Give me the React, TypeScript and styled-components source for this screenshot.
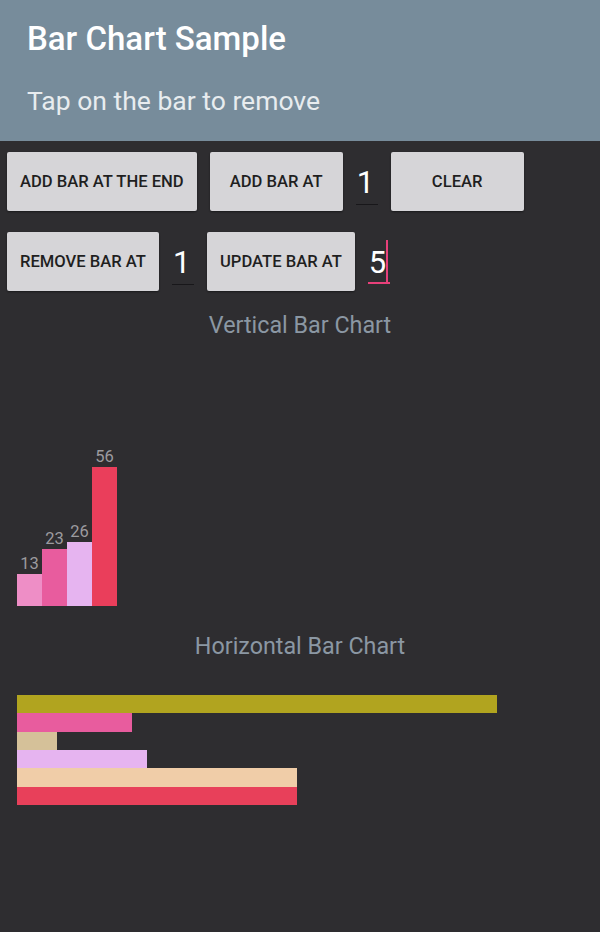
import styled, { createGlobalStyle } from 'styled-components';

const GlobalStyle = createGlobalStyle`
    html, body {
        margin: 0;
        padding: 0;
        background: #2e2d30;
    }
    body {
        font-family: Roboto, 'Noto Sans', 'Liberation Sans', sans-serif;
    }
`;

const VERTICAL_SCALE = 2.48;
const HORIZONTAL_SCALE = 5;

const verticalBars = [
    { id: 0, value: 13, color: '#ee8ec6' },
    { id: 1, value: 23, color: '#e85c9e' },
    { id: 2, value: 26, color: '#e6b4f0' },
    { id: 3, value: 56, color: '#ea3e5b' },
];

const horizontalBars = [
    { id: 0, value: 96, color: '#b1a41f' },
    { id: 1, value: 23, color: '#e85c9e' },
    { id: 2, value: 8, color: '#d5c199' },
    { id: 3, value: 26, color: '#e6b4f0' },
    { id: 4, value: 56, color: '#f0cda8' },
    { id: 5, value: 56, color: '#e8405a' },
];

const App = () => {
    return (
        <Page>
            <GlobalStyle />
            <Header>
                <Title>Bar Chart Sample</Title>
                <Subtitle>Tap on the bar to remove</Subtitle>
            </Header>

            <Controls>
                <Row>
                    <Button>ADD BAR AT THE END</Button>
                    <Button>ADD BAR AT</Button>
                    <Field>1</Field>
                    <Button>CLEAR</Button>
                </Row>
                <Row>
                    <Button>REMOVE BAR AT</Button>
                    <Field>1</Field>
                    <Button>UPDATE BAR AT</Button>
                    <Field $focused>
                        5
                        <Caret />
                    </Field>
                </Row>
            </Controls>

            <ChartTitle>Vertical Bar Chart</ChartTitle>
            <VerticalChart>
                {verticalBars.map((bar) => (
                    <Column key={bar.id}>
                        <BarLabel>{bar.value}</BarLabel>
                        <VBar style={{ height: bar.value * VERTICAL_SCALE, background: bar.color }} />
                    </Column>
                ))}
            </VerticalChart>

            <ChartTitle>Horizontal Bar Chart</ChartTitle>
            <HorizontalChart>
                {horizontalBars.map((bar) => (
                    <HBar key={bar.id} style={{ width: bar.value * HORIZONTAL_SCALE, background: bar.color }} />
                ))}
            </HorizontalChart>
        </Page>
    );
};
export default App;

const Page = styled.div`
    width: 600px;
    min-height: 932px;
    background: #2e2d30;
    display: flex;
    flex-direction: column;
`;
const Header = styled.header`
    height: 141px;
    box-sizing: border-box;
    padding: 21px 27px 0;
    background: #778c9b;
    display: flex;
    flex-direction: column;
`;
const Title = styled.h1`
    margin: 0;
    font-size: 33px;
    line-height: 36px;
    font-weight: 500;
    color: #ffffff;
`;
const Subtitle = styled.div`
    margin-top: 29px;
    font-size: 26.5px;
    line-height: 30px;
    font-weight: 400;
    color: #e8ecef;
`;
const Controls = styled.div`
    padding: 11px 7px 0;
    display: flex;
    flex-direction: column;
    gap: 21px;
`;
const Row = styled.div`
    display: flex;
    align-items: flex-start;
    gap: 13px;
`;
const Button = styled.button`
    height: 59px;
    min-width: 133px;
    padding: 0 13px;
    border: none;
    border-radius: 2px;
    background: #d6d5d8;
    box-shadow: 0 1px 2px rgba(0, 0, 0, 0.45);
    font-family: Roboto, 'Noto Sans', sans-serif;
    font-size: 16.6px;
    font-weight: 500;
    color: #1f1f1f;
    white-space: nowrap;
`;
const Field = styled.div<{ $focused?: boolean }>`
    position: relative;
    width: 22px;
    margin-top: 16px;
    padding: 0 0 ${(p) => (p.$focused ? '4px' : '6px')} 1px;
    box-sizing: border-box;
    font-size: 31px;
    line-height: 30px;
    color: #ffffff;
    border-bottom: ${(p) => (p.$focused ? '2px solid #e8407a' : '1px solid #18171a')};
`;
const Caret = styled.span`
    position: absolute;
    left: 18px;
    top: -8px;
    width: 2px;
    height: 42px;
    background: #e8407a;
`;
const ChartTitle = styled.div`
    margin-top: 21px;
    text-align: center;
    font-size: 23.3px;
    line-height: 26px;
    color: #8b97a3;
`;
const VerticalChart = styled.div`
    height: 268px;
    padding-left: 17px;
    margin-bottom: 6px;
    display: flex;
    align-items: flex-end;
`;
const Column = styled.div`
    width: 25px;
    display: flex;
    flex-direction: column;
    align-items: center;
`;
const BarLabel = styled.div`
    font-size: 16.5px;
    line-height: 18px;
    margin-bottom: 1px;
    color: #9c9b9f;
`;
const VBar = styled.div`
    width: 100%;
`;
const HorizontalChart = styled.div`
    margin-top: 36px;
    padding-left: 17px;
    display: flex;
    flex-direction: column;
    align-items: flex-start;
`;
const HBar = styled.div`
    height: 18.33px;
`;
